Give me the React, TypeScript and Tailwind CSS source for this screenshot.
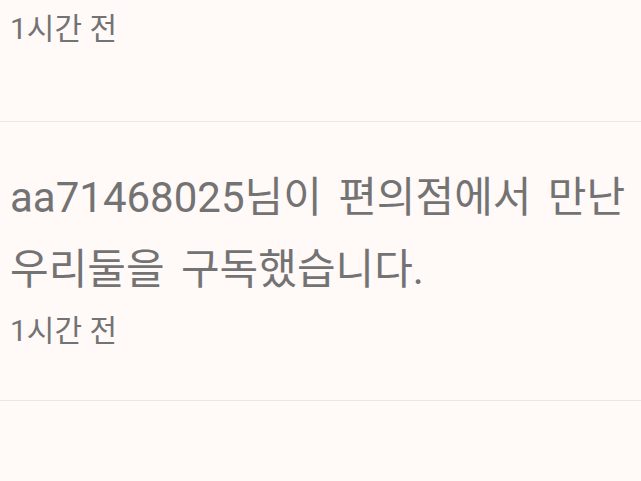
import React from 'react';

const FONT = 'font-["Roboto","Noto_Sans_CJK_KR",sans-serif]';

const App: React.FC = () => {
  return (
    <div className={`min-h-[481px] w-[641px] overflow-hidden bg-[#fff9f8] text-[#737373] ${FONT}`}>
      <div className="h-[122px] border-b border-[#e9e7e5] px-[10px] pt-[11px]">
        <p className="text-[30px] leading-[36px]">1시간 전</p>
      </div>
      <div className="h-[279px] border-b border-[#e9e7e5] px-[10px] pt-[40px]">
        <p className="whitespace-nowrap text-[42px] leading-[72px] [word-spacing:6px]">
          aa71468025님이 편의점에서 만난
          <br />
          우리둘을 구독했습니다.
        </p>
        <p className="mt-[7px] text-[30px] leading-[36px]">1시간 전</p>
      </div>
    </div>
  );
};

export default App;
